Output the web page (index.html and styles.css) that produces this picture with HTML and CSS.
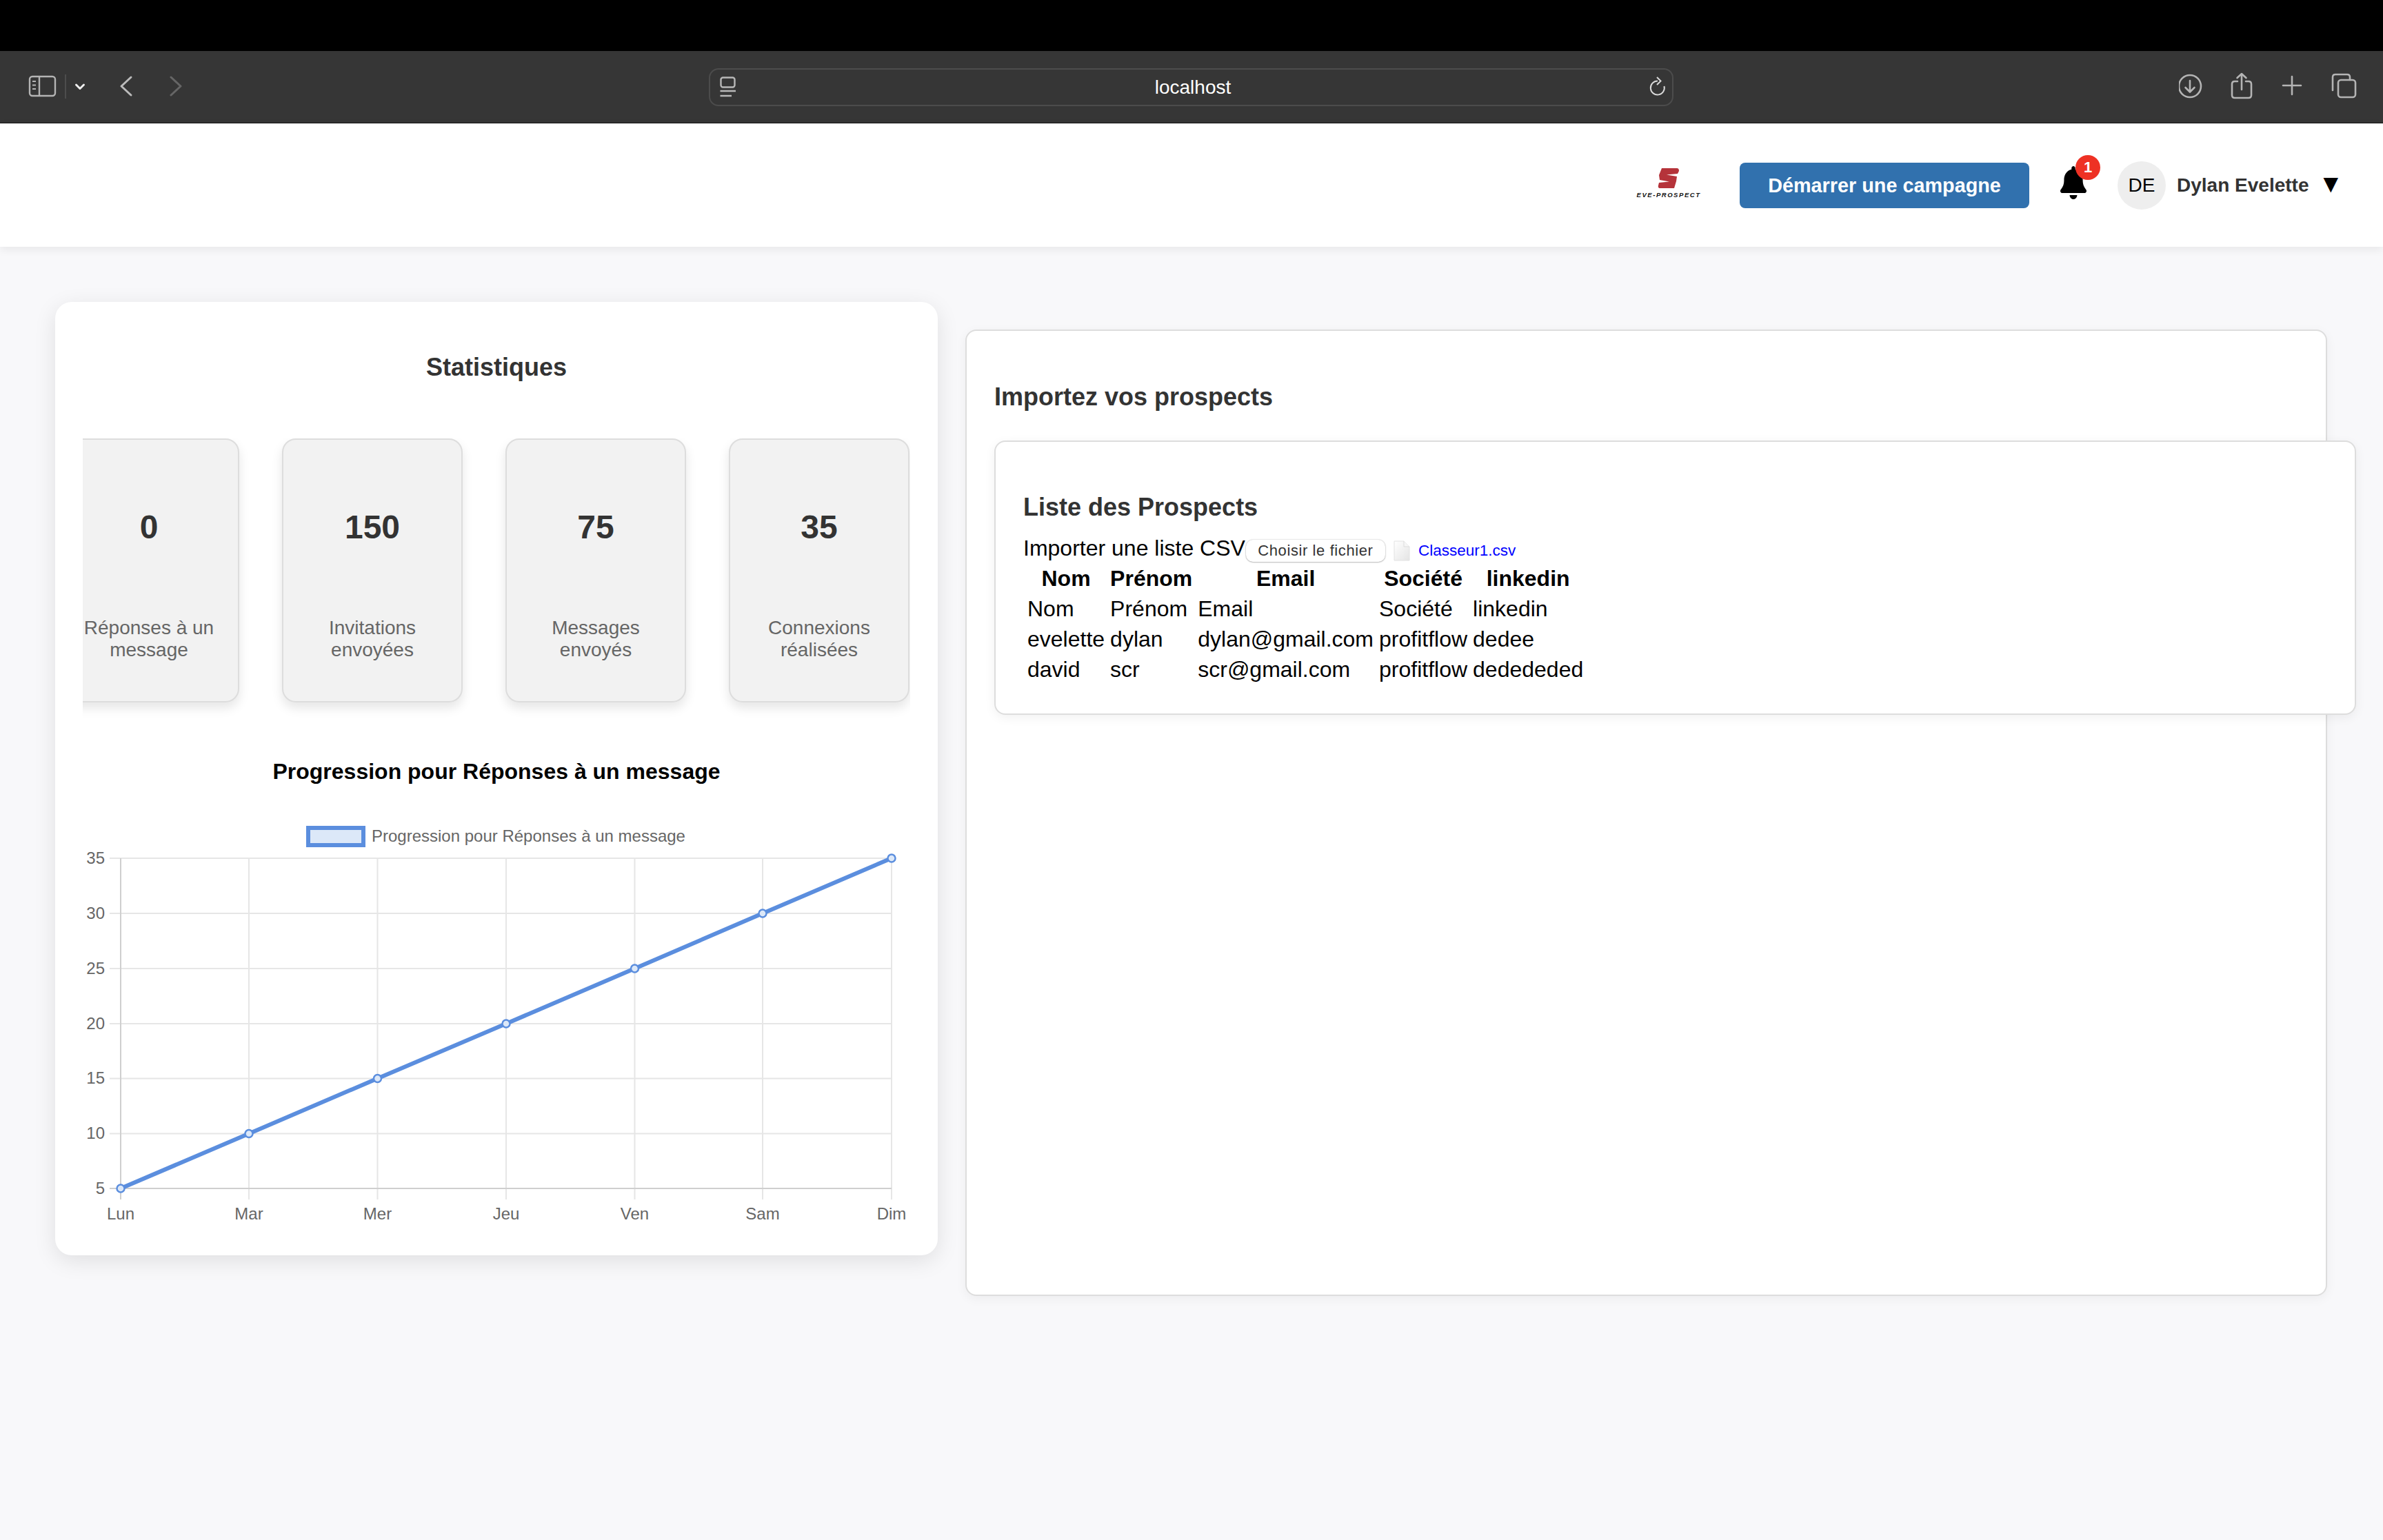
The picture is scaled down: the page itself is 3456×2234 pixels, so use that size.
FILE: index.html
```html
<!DOCTYPE html>
<html lang="fr">
<head>
<meta charset="utf-8">
<title>localhost</title>
<link rel="stylesheet" href="styles.css">
</head>
<body>
<div class="os-bar"></div>
<div class="toolbar">
  <svg class="tb-left" width="240" height="50" viewBox="30 101 240 50" fill="none">
    <rect x="43" y="111" width="37" height="28" rx="4" stroke="#b4b4b4" stroke-width="2.4"/>
    <path d="M57 111V139" stroke="#b4b4b4" stroke-width="2.4"/>
    <path d="M47 118H52M47 123.500H52M47 129H52" stroke="#b4b4b4" stroke-width="2"/>
    <path d="M95 108V143" stroke="#4d4d4d" stroke-width="2"/>
    <path d="M110.500 123L116 128.500 121.500 123" stroke="#eeeeee" stroke-width="3" stroke-linecap="round" stroke-linejoin="round"/>
    <path d="M190 112L176 125 190 138" stroke="#bbbbbb" stroke-width="3" stroke-linecap="round" stroke-linejoin="round"/>
    <path d="M248 112L262 125 248 138" stroke="#666666" stroke-width="3" stroke-linecap="round" stroke-linejoin="round"/>
  </svg>
  <div class="urlbar">
    <svg class="url-icon" width="24" height="30" viewBox="0 0 24 30" fill="none">
      <rect x="1.500" y="1.500" width="20" height="14" rx="3" stroke="#b8b8b8" stroke-width="2.400"/>
      <path d="M0.500 21H23M0.500 28H17" stroke="#b8b8b8" stroke-width="2.400"/>
    </svg>
    <span class="url-text">localhost</span>
    <svg class="url-reload" width="24" height="30" viewBox="0 0 24 30" fill="none">
      <path d="M12 6.500A10 10 0 1 0 21.500 14" stroke="#d8d8d8" stroke-width="2"/>
      <path d="M11 1L16.500 6.500 11 12" stroke="#d8d8d8" stroke-width="2"/>
    </svg>
  </div>
  <svg class="tb-right" width="270" height="50" viewBox="3160 101 270 50" fill="none" stroke="#b4b4b4" stroke-width="2.600" stroke-linecap="round" stroke-linejoin="round">
    <circle cx="3176" cy="125" r="16"/>
    <path d="M3176 117V133M3169.500 127L3176 133.500 3182.500 127"/>
    <path d="M3245 118H3241Q3237 118 3237 122V138Q3237 142 3241 142H3261Q3265 142 3265 138V122Q3265 118 3261 118H3257"/>
    <path d="M3251 130V107M3244.500 113L3251 107 3257.500 113"/>
    <path d="M3311 124H3337M3324 111V137"/>
    <path d="M3383 131V112Q3383 108 3387 108H3404Q3408 108 3408 112V116"/>
    <rect x="3391" y="116" width="25" height="25" rx="4"/>
  </svg>
</div>

<header class="app-header">
  <div class="logo">
    <svg class="logo-mark" width="32" height="30" viewBox="0 0 32 30">
      <path d="M6 0H28Q31 0 31 4L29 8 13 9.500 28 12 27 19 24 29H4Q0 29 1 25L2 21 17 19.500 3 17 2 10Z" fill="#b5333a"/>
    </svg>
    <span class="logo-text">EVE-PROSPECT</span>
  </div>
  <button class="cta">Démarrer une campagne</button>
  <div class="bell">
    <svg width="38" height="48" viewBox="0 0 448 512" preserveAspectRatio="none"><path fill="#000" d="M224 0c-17.700 0-32 14.300-32 32V51.200C119 66 64 130.600 64 208v18.800c0 47-17.300 92.400-48.500 127.600l-7.400 8.300c-8.400 9.400-10.400 22.900-5.300 34.400S19.400 416 32 416H416c12.600 0 24-7.400 29.200-18.900s3.100-25-5.300-34.400l-7.400-8.300C401.300 319.200 384 273.900 384 226.800V208c0-77.400-55-142-128-156.800V32c0-17.700-14.300-32-32-32zm45.300 493.300c12-12 18.700-28.300 18.700-45.300H224 160c0 17 6.700 33.300 18.700 45.300s28.300 18.700 45.300 18.700s33.300-6.700 45.300-18.700z"/></svg>
    <span class="badge">1</span>
  </div>
  <div class="avatar">DE</div>
  <span class="user-name">Dylan Evelette</span>
  <span class="caret">▼</span>
</header>

<main class="content">
  <section class="stats-panel">
    <h2 class="stats-title">Statistiques</h2>
    <div class="stat-row">
      <div class="stat-card"><div class="stat-value">0</div><div class="stat-label">Réponses à un message</div></div>
      <div class="stat-card"><div class="stat-value">150</div><div class="stat-label">Invitations envoyées</div></div>
      <div class="stat-card"><div class="stat-value">75</div><div class="stat-label">Messages envoyés</div></div>
      <div class="stat-card"><div class="stat-value">35</div><div class="stat-label">Connexions réalisées</div></div>
    </div>
    <h3 class="chart-title">Progression pour Réponses à un message</h3>
    <svg class="chart" width="1200" height="600" viewBox="120 1181 1200 600">
      <g stroke="#e6e6e6" stroke-width="2">
        <path d="M159 1245H1293M159 1325H1293M159 1405H1293M159 1485H1293M159 1564.500H1293M159 1644.500H1293"/>
        <path d="M361 1245V1740M547.500 1245V1740M734 1245V1740M920.500 1245V1740M1106 1245V1740M1293 1245V1740"/>
      </g>
      <g stroke="#cfcfcf" stroke-width="2">
        <path d="M175 1245V1740"/>
        <path d="M159 1724H1293"/>
      </g>
      <rect class="legend-box" x="447" y="1201" width="80" height="25"/>
      <text class="legend-text" x="539" y="1221">Progression pour Réponses à un message</text>
      <g class="tick-y">
        <text x="152" y="1253">35</text><text x="152" y="1333">30</text><text x="152" y="1413">25</text><text x="152" y="1493">20</text><text x="152" y="1572">15</text><text x="152" y="1652">10</text><text x="152" y="1732">5</text>
      </g>
      <g class="tick-x">
        <text x="175" y="1769">Lun</text><text x="361" y="1769">Mar</text><text x="547.500" y="1769">Mer</text><text x="734" y="1769">Jeu</text><text x="920.500" y="1769">Ven</text><text x="1106" y="1769">Sam</text><text x="1293" y="1769">Dim</text>
      </g>
      <polyline class="line" points="175,1724 361,1644.500 547.500,1564.500 734,1485 920.500,1405 1106,1325 1293,1245"/>
      <g class="pts">
        <circle cx="175" cy="1724" r="5.500"/><circle cx="361" cy="1644.500" r="5.500"/><circle cx="547.500" cy="1564.500" r="5.500"/><circle cx="734" cy="1485" r="5.500"/><circle cx="920.500" cy="1405" r="5.500"/><circle cx="1106" cy="1325" r="5.500"/><circle cx="1293" cy="1245" r="5.500"/>
      </g>
    </svg>
  </section>

  <section class="import-panel">
    <h2 class="import-title">Importez vos prospects</h2>
    <div class="list-panel">
      <h3 class="list-title">Liste des Prospects</h3>
      <div class="file-row">
        <label class="file-label">Importer une liste CSV</label>
        <span class="file-btn">Choisir le fichier</span>
        <svg class="file-icon" width="24" height="30" viewBox="0 0 24 30">
          <defs><linearGradient id="doc" x1="0" y1="0" x2="1" y2="1"><stop offset="0" stop-color="#ffffff"/><stop offset="1" stop-color="#e4e4e4"/></linearGradient></defs>
          <path d="M1 1H15L23 9V29H1Z" fill="url(#doc)" stroke="#e2e2e2"/>
          <path d="M15 1V9H23" fill="#f6f6f6" stroke="#dddddd"/>
        </svg>
        <span class="file-name">Classeur1.csv</span>
      </div>
      <table class="prospects">
        <thead><tr><th>Nom</th><th>Prénom</th><th>Email</th><th>Société</th><th>linkedin</th></tr></thead>
        <tbody>
          <tr><td>Nom</td><td>Prénom</td><td>Email</td><td>Société</td><td>linkedin</td></tr>
          <tr><td>evelette</td><td>dylan</td><td>dylan@gmail.com</td><td>profitflow</td><td>dedee</td></tr>
          <tr><td>david</td><td>scr</td><td>scr@gmail.com</td><td>profitflow</td><td>dedededed</td></tr>
        </tbody>
      </table>
    </div>
  </section>
</main>
</body>
</html>
```
FILE: styles.css
```css
* { box-sizing: border-box; }
html, body { margin: 0; padding: 0; }
body {
  width: 3456px;
  height: 2234px;
  overflow: hidden;
  background: #f8f8fa;
  font-family: "Liberation Sans", Arial, sans-serif;
  color: #000;
}
.os-bar { height: 74px; background: #000; }
.toolbar {
  height: 105px;
  background: #363636;
  border-bottom: 1px solid #111;
  display: flex;
  align-items: center;
  padding-left: 30px;
}
.tb-left, .tb-right { flex: none; display: block; }
.urlbar {
  flex: none;
  width: 1399px;
  height: 55px;
  margin-left: 758px;
  border: 2px solid #4c4c4c;
  border-radius: 14px;
  display: flex;
  align-items: center;
  justify-content: space-between;
  padding: 0 9px 0 14px;
}
.url-text { color: #fff; font-size: 28px; line-height: 32px; margin-top: 2px; }
.tb-right { margin-left: 733px; }

.app-header {
  height: 179px;
  background: #fff;
  display: flex;
  align-items: center;
  justify-content: flex-end;
  padding: 0 65px 0 0;
  box-shadow: 0 4px 12px rgba(0, 0, 0, 0.07);
  position: relative;
}
.logo { width: 92px; display: flex; flex-direction: column; align-items: center; margin-bottom: 5px; }
.logo-mark { display: block; }
.logo-text {
  font-size: 9.500px;
  line-height: 12px;
  font-weight: 700;
  font-style: italic;
  letter-spacing: 1.550px;
  white-space: nowrap;
  color: #111;
  margin-top: 3px;
}
.cta {
  width: 420px;
  height: 66px;
  margin: 0 0 0 57px;
  padding: 0;
  border: 0;
  border-radius: 8px;
  background: #3171ae;
  color: #fff;
  font: 700 28.800px/32px "Liberation Sans", Arial, sans-serif;
}
.bell { position: relative; width: 38px; height: 48px; margin-left: 45px; margin-bottom: 8px; }
.bell svg { display: block; }
.badge {
  position: absolute;
  left: 22px;
  top: -16px;
  width: 36px;
  height: 36px;
  border-radius: 50%;
  background: #ee3124;
  color: #fff;
  font-size: 22px;
  font-weight: 700;
  line-height: 36px;
  text-align: center;
}
.avatar {
  width: 70px;
  height: 70px;
  margin-left: 45px;
  border-radius: 50%;
  background: #eee;
  font-size: 28px;
  line-height: 70px;
  text-align: center;
}
.user-name { margin-left: 16px; font-size: 28px; font-weight: 700; color: #333; line-height: 32px; }
.caret { margin: 0 0 4px 21px; font-family: "DejaVu Sans", sans-serif; font-size: 28px; line-height: 32px; }

.content { display: flex; align-items: flex-start; padding: 80px 0 0 80px; }
.stats-panel {
  flex: none;
  width: 1280px;
  height: 1383px;
  background: #fff;
  border-radius: 24px;
  padding: 40px;
  box-shadow: 0 8px 32px rgba(0, 0, 0, 0.1);
}
.stats-title {
  margin: 34px 0 0;
  font-size: 36px;
  line-height: 42px;
  font-weight: 700;
  text-align: center;
  color: #333;
}
.stat-row {
  display: flex;
  justify-content: flex-end;
  gap: 62px;
  overflow: hidden;
  margin-top: 82px;
  padding: 0 1px 40px 0;
}
.stat-card {
  flex: none;
  width: 262px;
  height: 383px;
  background: #f2f2f2;
  border: 2px solid #ddd;
  border-radius: 20px;
  box-shadow: 0 8px 16px rgba(0, 0, 0, 0.1);
  text-align: center;
  padding: 99px 20px 0;
}
.stat-value { font-size: 48px; line-height: 56px; font-weight: 700; color: #333; }
.stat-label { margin-top: 102px; font-size: 28px; line-height: 32px; color: #666; }
.chart-title {
  margin: 41px 0 0;
  font-size: 32px;
  line-height: 38px;
  font-weight: 700;
  text-align: center;
  color: #000;
}
.chart { display: block; margin-top: 43px; font-family: "Liberation Sans", Arial, sans-serif; font-size: 24px; }
.legend-box { fill: #dce8f8; stroke: #5b8ede; stroke-width: 6; }
.legend-text { fill: #666; }
.tick-y text { fill: #666; text-anchor: end; }
.tick-x text { fill: #666; text-anchor: middle; }
.line { fill: none; stroke: #5b8ede; stroke-width: 6; }
.pts circle { fill: #dce8f8; stroke: #5b8ede; stroke-width: 2.500; }

.import-panel {
  flex: none;
  width: 1975px;
  height: 1402px;
  margin: 40px 0 0 40px;
  padding: 40px;
  background: #fff;
  border: 2px solid #ddd;
  border-radius: 16px;
  box-shadow: 0 4px 16px rgba(0, 0, 0, 0.05);
}
.import-title { margin: 35px 0 0; font-size: 36px; line-height: 42px; font-weight: 700; color: #333; }
.list-panel {
  width: 1975px;
  height: 398px;
  margin-top: 42px;
  padding: 40px;
  background: #fff;
  border: 2px solid #ddd;
  border-radius: 16px;
  box-shadow: 0 4px 16px rgba(0, 0, 0, 0.06);
}
.list-title { margin: 34px 0 0; font-size: 36px; line-height: 42px; font-weight: 700; color: #333; }
.file-row { display: flex; align-items: center; height: 36px; margin-top: 20px; }
.file-label { font-size: 32px; line-height: 36px; }
.file-btn {
  width: 202px;
  height: 32px;
  margin: 8px 0 0 1px;
  background: #fff;
  border-radius: 10px;
  box-shadow: 0 0 2px rgba(0, 0, 0, 0.3), 0 1px 2px rgba(0, 0, 0, 0.2);
  color: #333;
  font-size: 22px;
  line-height: 32px;
  text-align: center;
  letter-spacing: 0.600px;
}
.file-icon { margin: 8px 0 0 12px; }
.file-name { margin: 8px 0 0 12px; color: #00f; font-size: 22.500px; line-height: 32px; }
.prospects { border-collapse: separate; border-spacing: 4px; margin-top: 2px; font-size: 32px; line-height: 36px; }
.prospects th, .prospects td { padding: 2px; }
.prospects th { text-align: center; font-weight: 700; }
.prospects td { text-align: left; }
```
